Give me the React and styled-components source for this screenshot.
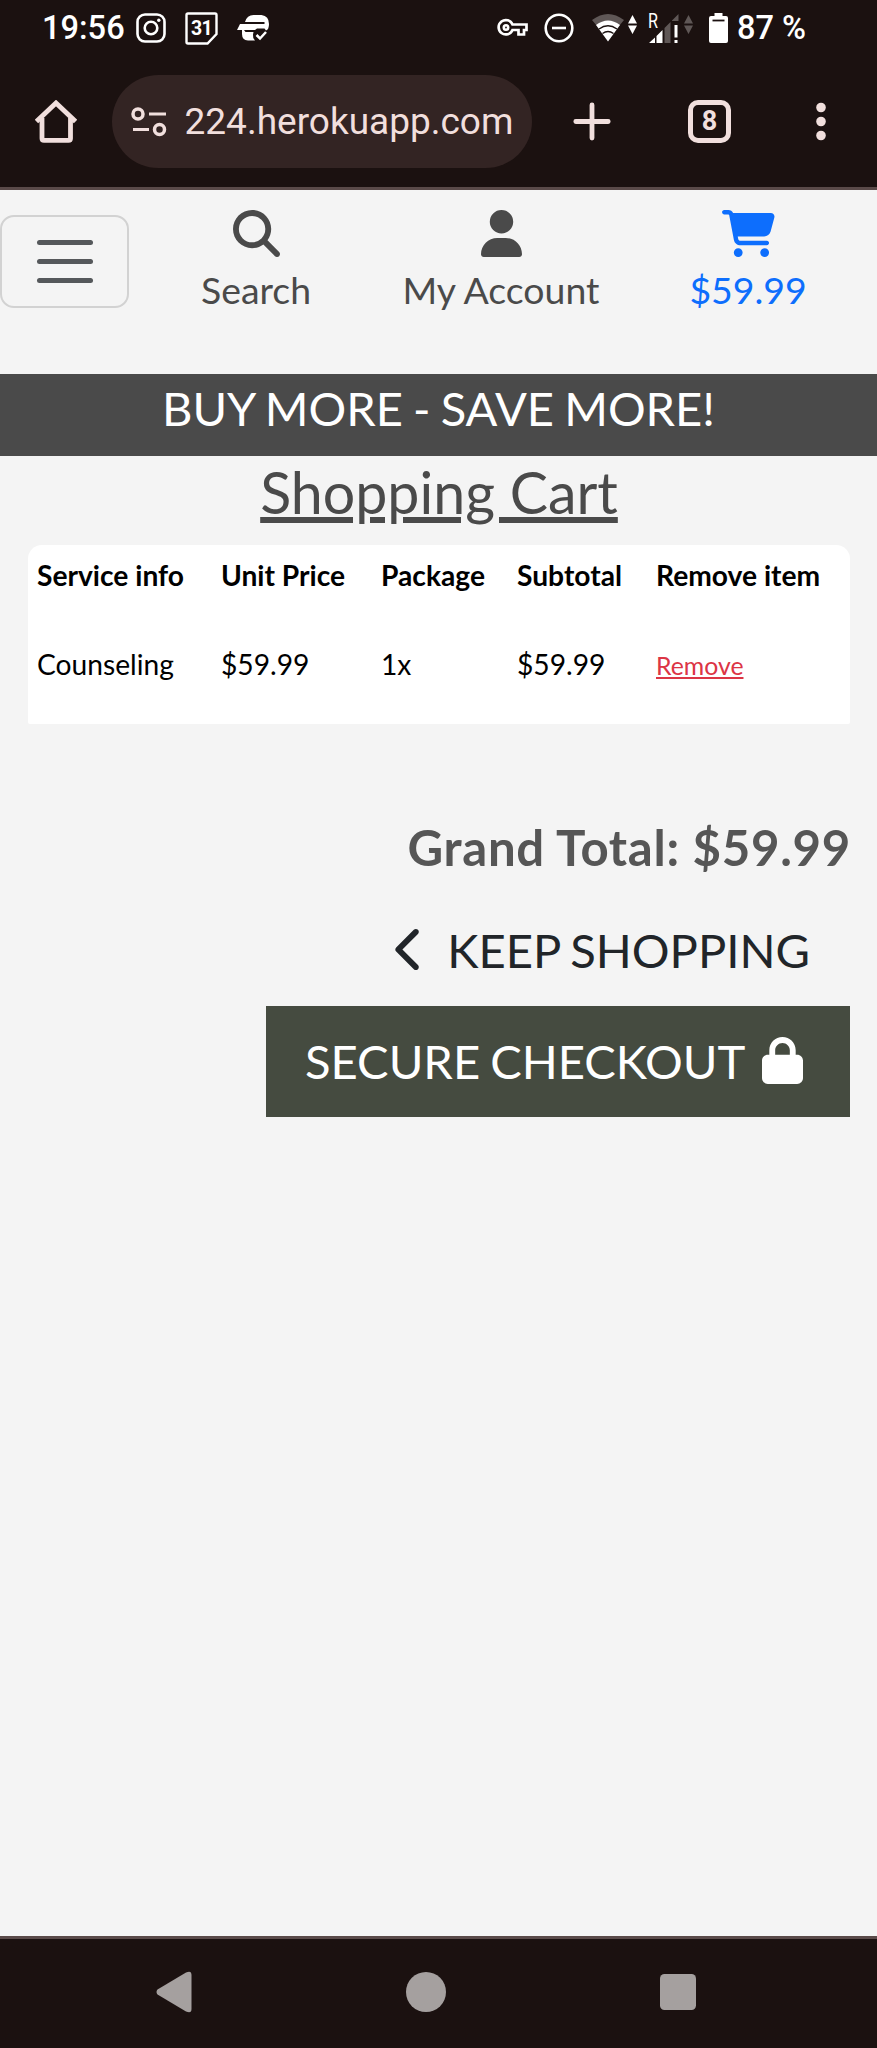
import React from "react";
import styled, { createGlobalStyle } from "styled-components";
import {
  FaMagnifyingGlass,
  FaUser,
  FaCartShopping,
  FaChevronLeft,
  FaLock,
} from "react-icons/fa6";

const GlobalStyle = createGlobalStyle`
  * { box-sizing: border-box; }
  body {
    margin: 0;
    background: #f4f4f4;
    font-family: Lato, sans-serif;
  }
  svg { display: block; flex: none; }
`;

const Screen = styled.div`
  width: 877px;
  height: 2048px;
  display: flex;
  flex-direction: column;
  overflow: hidden;
  background: #f4f4f4;
`;

const BrowserChrome = styled.header`
  height: 190px;
  flex: none;
  background: #1b1110;
  border-bottom: 3px solid #5a4a49;
  color: #f1dfdd;
  font-family: Roboto, sans-serif;
`;

const StatusBar = styled.div`
  height: 56px;
  padding: 0 71px 0 42px;
  display: flex;
  justify-content: space-between;
  align-items: center;
  color: #fff;
`;

const StatusGroup = styled.div`
  display: flex;
  align-items: center;
`;

const StatusText = styled.span`
  font-size: 32.6px;
  font-weight: 500;
  line-height: 56px;
  margin-left: ${(p) => p.$left || 0}px;
  white-space: pre;
`;

const StatusIcon = styled.svg`
  margin-left: ${(p) => p.$left || 0}px;
  overflow: visible;
`;

const Toolbar = styled.div`
  height: 131px;
  padding: 19px 0 0 35px;
  display: flex;
  align-items: flex-start;
`;

const ToolIcon = styled.svg`
  margin: ${(p) => p.$top}px 0 0 ${(p) => p.$left || 0}px;
`;

const AddressPill = styled.div`
  width: 420px;
  height: 93px;
  margin-left: 35px;
  padding-left: 19px;
  border-radius: 47px;
  background: #332423;
  display: flex;
  align-items: center;
`;

const Address = styled.span`
  margin-left: 17.5px;
  font-size: 37px;
  line-height: 94px;
`;

const TabCount = styled.div`
  width: 43px;
  height: 43px;
  margin: 25px 0 0 77px;
  border: 5px solid #f1dfdd;
  border-radius: 10px;
  font-size: 27px;
  font-weight: 700;
  line-height: 33px;
  text-align: center;
`;

const SiteNav = styled.nav`
  height: 184px;
  flex: none;
  display: flex;
  align-items: flex-start;
`;

const MenuButton = styled.button`
  width: 129px;
  height: 93px;
  margin: 25px 0 0;
  padding: 0 0 0 35px;
  border: 2px solid #d2d2d2;
  border-radius: 14px;
  background: transparent;
  display: flex;
  flex-direction: column;
  justify-content: center;
  gap: 14px;
`;

const MenuLine = styled.span`
  width: 56px;
  height: 4.7px;
  border-radius: 3px;
  background: #55585b;
`;

const NavLink = styled.a`
  width: ${(p) => p.$width}px;
  margin-left: ${(p) => p.$left}px;
  padding-top: 20px;
  display: flex;
  flex-direction: column;
  align-items: center;
  gap: 10px;
  font-size: 37.4px;
  line-height: 45px;
  white-space: nowrap;
  color: ${(p) => (p.$active ? "#0d6efd" : "#4a4a4a")};
`;

const Glyph = styled.span`
  display: flex;
  svg {
    width: ${(p) => p.$width}px;
    height: 47px;
  }
`;

const Banner = styled.div`
  height: 82px;
  flex: none;
  background: #4a4a4a;
  color: #fff;
  text-align: center;
  font-size: 47.1px;
  word-spacing: -1.9px;
  line-height: 69px;
`;

const Content = styled.main`
  flex: 1;
  padding: 0 27px 0 28px;
  display: flex;
  flex-direction: column;
`;

const Title = styled.h1`
  margin: 0;
  height: 89px;
  font-size: 57.3px;
  font-weight: 400;
  line-height: 72px;
  text-align: center;
  text-decoration: underline;
  text-decoration-thickness: 5.5px;
  color: #4a4a4a;
`;

const CartTable = styled.section`
  height: 179px;
  padding-left: 9px;
  border-radius: 14px 14px 2px 2px;
  background: #fff;
  color: #000;
  font-size: 28.2px;
`;

const CartRow = styled.div`
  display: grid;
  grid-template-columns: 184px 160px 136px 139px 1fr;
  align-items: baseline;
  height: 89px;
  line-height: 60px;
  font-weight: ${(p) => (p.$head ? 700 : 400)};
  white-space: nowrap;
`;

const RemoveLink = styled.a`
  font-size: 24.8px;
  text-decoration: underline;
  color: #dc3545;
`;

const GrandTotal = styled.div`
  margin: 87px -1px 0 0;
  height: 78px;
  font-size: 49.2px;
  font-weight: 700;
  letter-spacing: 0.7px;
  line-height: 72px;
  text-align: right;
  color: #565656;
`;

const KeepShopping = styled.a`
  height: 117px;
  padding: 4px 40px 0 0;
  display: flex;
  justify-content: flex-end;
  align-items: center;
  gap: 22px;
  font-size: 47.2px;
  word-spacing: -2px;
  line-height: 60px;
  color: #212529;
`;

const CheckoutButton = styled.a`
  align-self: flex-end;
  width: 584px;
  height: 111px;
  padding: 0 47px 2px 39px;
  display: flex;
  justify-content: space-between;
  align-items: center;
  background: #454b40;
  color: #fff;
  font-size: 47.2px;
  word-spacing: -2px;
  line-height: 60px;
  white-space: nowrap;
`;

const SystemNav = styled.footer`
  height: 112px;
  flex: none;
  padding: 0 181px 3px 156px;
  border-top: 3px solid #5a4a49;
  background: #1b1110;
  display: flex;
  justify-content: space-between;
  align-items: center;
`;

const NetArrows = ({ left, color }) => (
  <StatusIcon $left={left} width="9" height="30" viewBox="0 0 9 30" fill={color}>
    <path d="M4.5 2 9 10.5H0zM0 12.500H9L4.500 21z" />
  </StatusIcon>
);

const InstagramIcon = () => (
  <StatusIcon $left={11} width="30" height="30" viewBox="0 0 30 30" fill="none" stroke="#fff">
    <rect x="1.500" y="1.500" width="27" height="27" rx="7.500" strokeWidth="2.600" />
    <circle cx="15" cy="15" r="6.300" strokeWidth="2.600" />
    <circle cx="22.800" cy="7.300" r="1.700" fill="#fff" stroke="none" />
  </StatusIcon>
);

const CalendarIcon = () => (
  <StatusIcon $left={19} width="33" height="33" viewBox="0 0 33 33">
    <path
      d="M3 1.500H30Q31.500 1.500 31.500 3V22L22.500 31.500H3Q1.500 31.500 1.500 30V3Q1.500 1.500 3 1.500Z"
      fill="none"
      stroke="#fff"
      strokeWidth="2.400"
    />
    <text x="16.500" y="22.800" textAnchor="middle" fill="#fff" fontSize="19.500" fontWeight="700" fontFamily="Roboto, sans-serif" letterSpacing="-0.8">
      31
    </text>
  </StatusIcon>
);

const CourierIcon = () => (
  <StatusIcon $left={19} width="33" height="30" viewBox="0 0 33 30">
    <path fill="#fff" d="M8 9Q10 2 16.500 2H24.500Q32 3 32 11Q32 16.500 29 17.500L27.500 15.500H20L18 17H0L3 11H27.500V9Z" />
    <path fill="#fff" d="M5 17H7L8.500 19H16.500L16 21.500Q15.500 25 18 27.500H11Q5 27 5 21Z" />
    <path fill="none" stroke="#fff" strokeWidth="2.500" d="M19.500 22 23 25.500 29 19" />
  </StatusIcon>
);

const KeyIcon = () => (
  <StatusIcon width="30" height="18" viewBox="0 0 30 18" fill="none" stroke="#fff" strokeWidth="2.700">
    <path d="M14.500 5.500H28.500V11H26V15.500H20.500V11H14.500A7.200 7.200 0 1 1 14.500 5.500Z" />
    <circle cx="8" cy="8.500" r="2.200" strokeWidth="2.600" />
  </StatusIcon>
);

const WifiIcon = () => (
  <StatusIcon $left={18} width="32" height="30" viewBox="0 0 32 30">
    <path fill="#5f5756" d="M0 7Q16-5 32 7L27.500 12.500Q16 4 4.500 12.500Z" />
    <path fill="#fff" d="M4 12Q16 3 28 12L16 28.500Z" />
    <path fill="none" stroke="#1b1110" strokeWidth="1.400" d="M7 16Q16 9.500 25 16M10.500 20.500Q16 16.500 21.500 20.500" />
  </StatusIcon>
);

const SignalIcon = () => (
  <StatusIcon $left={10} width="34" height="31" viewBox="-1 0 34 31">
    <text x="0" y="15" fill="#fff" fontSize="19.500" fontFamily="Roboto, sans-serif" textLength="10" lengthAdjust="spacingAndGlyphs">
      R
    </text>
    <path fill="#fff" d="M1 30 7 24.500V30ZM8.500 23 14.500 17V30H8.500Z" />
    <path fill="#5f5756" d="M16.500 15 22.500 9V30H16.500ZM24 7.500 30.500 1V8H24Z" />
    <path fill="#fff" d="M26.500 12H29.500V24.500H26.500ZM26.500 27H29.500V30H26.500Z" />
  </StatusIcon>
);

const BatteryIcon = () => (
  <StatusIcon $left={16} width="19" height="30" viewBox="0 0 19 30">
    <path fill="#fff" d="M5.500 0H13.500V3H17Q19 3 19 5V28Q19 30 17 30H2Q0 30 0 28V5Q0 3 2 3H5.500Z" />
    <path stroke="#1b1110" strokeWidth="1.800" d="M3.500 7.500H15.500" />
  </StatusIcon>
);

export default function App() {
  return (
    <Screen>
      <GlobalStyle />
      <BrowserChrome>
        <StatusBar>
          <StatusGroup>
            <StatusText>19:56</StatusText>
            <InstagramIcon />
            <CalendarIcon />
            <CourierIcon />
          </StatusGroup>
          <StatusGroup>
            <KeyIcon />
            <StatusIcon $left={16} width="30" height="30" viewBox="0 0 30 30" fill="none" stroke="#fff" strokeWidth="2.600">
              <circle cx="15" cy="15" r="13.300" />
              <path d="M8 15H22" />
            </StatusIcon>
            <WifiIcon />
            <NetArrows left={4} color="#fff" />
            <SignalIcon />
            <NetArrows left={3} color="#5f5756" />
            <BatteryIcon />
            <StatusText $left={9}>87 %</StatusText>
          </StatusGroup>
        </StatusBar>
        <Toolbar>
          <ToolIcon $top={25} width="42" height="43" viewBox="0 0 42 43" fill="none" stroke="#f1dfdd" strokeWidth="4.800" strokeLinejoin="round">
            <path d="M1.500 21.500 21 3 40.500 21.500" strokeLinejoin="miter" />
            <path d="M7 18V38.500Q7 40.300 9 40.300H33.500Q35.500 40.300 35.500 38.500V18" />
          </ToolIcon>
          <AddressPill>
            <svg width="36" height="30" viewBox="0 0 36 30" fill="none" stroke="#f1dfdd" strokeWidth="3.500">
              <circle cx="7" cy="7" r="5" />
              <path d="M18 7H35M2 22.500H18" strokeWidth="3" />
              <circle cx="28.500" cy="22.500" r="5" />
            </svg>
            <Address>224.herokuapp.com</Address>
          </AddressPill>
          <ToolIcon $top={27} $left={41} width="38" height="39" viewBox="0 0 38 39" stroke="#f1dfdd" strokeWidth="4.800" strokeLinecap="round">
            <path d="M19 3V36M2.800 19.500H35.200" />
          </ToolIcon>
          <TabCount>8</TabCount>
          <ToolIcon $top={27} $left={85} width="10" height="39" viewBox="0 0 10 39" fill="#f1dfdd">
            <circle cx="5" cy="5.500" r="4.800" />
            <circle cx="5" cy="19.500" r="4.800" />
            <circle cx="5" cy="33.500" r="4.800" />
          </ToolIcon>
        </Toolbar>
      </BrowserChrome>

      <SiteNav>
        <MenuButton aria-label="Menu">
          <MenuLine />
          <MenuLine />
          <MenuLine />
        </MenuButton>
        <NavLink $width={112} $left={71}>
          <Glyph $width={47}>
            <FaMagnifyingGlass />
          </Glyph>
          Search
        </NavLink>
        <NavLink $width={196} $left={91}>
          <Glyph $width={41}>
            <FaUser />
          </Glyph>
          My Account
        </NavLink>
        <NavLink $width={116} $left={91} $active>
          <Glyph $width={53}>
            <FaCartShopping />
          </Glyph>
          $59.99
        </NavLink>
      </SiteNav>

      <Banner>BUY MORE - SAVE MORE!</Banner>

      <Content>
        <Title>Shopping Cart</Title>
        <CartTable>
          <CartRow $head>
            <span>Service info</span>
            <span>Unit Price</span>
            <span>Package</span>
            <span>Subtotal</span>
            <span>Remove item</span>
          </CartRow>
          <CartRow>
            <span>Counseling</span>
            <span>$59.99</span>
            <span>1x</span>
            <span>$59.99</span>
            <RemoveLink>Remove</RemoveLink>
          </CartRow>
        </CartTable>
        <GrandTotal>Grand Total: $59.99</GrandTotal>
        <KeepShopping>
          <Glyph $width={30}>
            <FaChevronLeft />
          </Glyph>
          KEEP SHOPPING
        </KeepShopping>
        <CheckoutButton>
          SECURE CHECKOUT
          <Glyph $width={41}>
            <FaLock />
          </Glyph>
        </CheckoutButton>
      </Content>

      <SystemNav>
        <svg width="36" height="42" viewBox="0 0 36 42" fill="#a5a09f">
          <path d="M1.500 18.500 30 1.500Q35.500-1 35.500 4V38Q35.500 43 30 40.500L1.500 23.500Q-.5 21 1.500 18.500Z" />
        </svg>
        <svg width="40" height="40" viewBox="0 0 40 40" fill="#a5a09f">
          <circle cx="20" cy="20" r="20" />
        </svg>
        <svg width="36" height="36" viewBox="0 0 36 36" fill="#a5a09f">
          <rect width="36" height="36" rx="4.500" />
        </svg>
      </SystemNav>
    </Screen>
  );
}
